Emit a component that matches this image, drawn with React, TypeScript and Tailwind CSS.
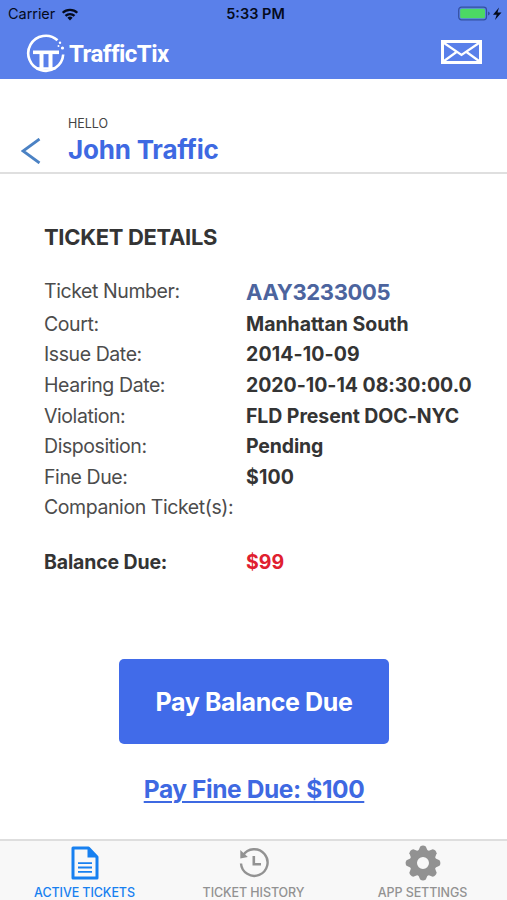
import type { ReactNode } from "react";

type Detail = { label: string; value: string; spacing: string };

const details: Detail[] = [
  { label: "Court:", value: "Manhattan South", spacing: "tracking-[-0.03px]" },
  { label: "Issue Date:", value: "2014-10-09", spacing: "tracking-[0.12px]" },
  { label: "Hearing Date:", value: "2020-10-14 08:30:00.0", spacing: "tracking-[-0.03px]" },
  { label: "Violation:", value: "FLD Present DOC-NYC", spacing: "tracking-[-0.08px]" },
  { label: "Disposition:", value: "Pending", spacing: "tracking-[-0.15px]" },
  { label: "Fine Due:", value: "$100", spacing: "tracking-[0.15px]" },
  { label: "Companion Ticket(s):", value: "", spacing: "tracking-[0px]" },
];

function StatusBar() {
  return (
    <div className="grid h-7 grid-cols-3 items-center pl-2 pr-1 text-[#050b1c]">
      <div className="flex items-center gap-[6px]">
        <span className="text-[14.5px] leading-none tracking-[-0.05px]">Carrier</span>
        <svg width="18" height="13" viewBox="0 0 17 13" fill="none" stroke="#050b1c" strokeWidth="2.3">
          <path d="M1.2 4.8a10.4 10.4 0 0 1 14.6 0M4 7.9a6.4 6.4 0 0 1 9 0" />
          <path d="M8.5 12.5 5.9 9.8a3.7 3.7 0 0 1 5.2 0z" fill="#050b1c" stroke="none" />
        </svg>
      </div>
      <span className="text-center text-[14.5px] font-semibold leading-none">5:33 PM</span>
      <div className="flex justify-end">
        <svg width="45" height="16" viewBox="0 0 45 16">
          <rect x=".7" y="1.2" width="27.8" height="12.6" rx="2.8" fill="none" stroke="#34509f" strokeWidth="1.2" />
          <rect x="2.2" y="2.7" width="24.8" height="9.6" rx="1.5" fill="#4cd964" />
          <path d="M30 5.500v4q1.800-.5 1.800-2T30 5.500" fill="#34509f" />
          <path d="M41 1.500 35 8.700h3.700l-1.700 5.300L43.500 6.500h-4z" fill="#050b1c" />
        </svg>
      </div>
    </div>
  );
}

function Logo() {
  return (
    <div className="flex items-center gap-[3px] text-white">
      <svg className="mb-[2px]" width="40" height="40" viewBox="0 0 40 40" fill="none" stroke="white">
        <path d="M31.500 7.300A17.500 17.500 0 1 0 37.200 21.500" strokeWidth="2.600" />
        <path d="M7 19.300h26" strokeWidth="3.600" />
        <path d="M15.500 20v16M24.500 20v16" strokeWidth="4" />
        <path d="M10.500 35.500h19" strokeWidth="2.500" />
        <circle cx="34" cy="9.800" r="1.200" fill="white" stroke="none" />
        <circle cx="36.500" cy="15" r="1.600" fill="white" stroke="none" />
        <circle cx="32.500" cy="13" r="1" fill="white" stroke="none" />
      </svg>
      <span className="mt-px font-['Roboto',sans-serif] text-[24px] font-bold leading-none tracking-[-0.5px]">TrafficTix</span>
    </div>
  );
}

function Tab({ label, color, children }: { label: string; color: string; children: ReactNode }) {
  return (
    <div className={`flex flex-1 flex-col items-center ${color}`}>
      <div className="flex h-[44px] items-center justify-center">{children}</div>
      <span className="mt-px whitespace-nowrap text-[12.5px] font-medium leading-[13px] tracking-[-0.08px]">{label}</span>
    </div>
  );
}

export default function App() {
  return (
    <div className="flex h-[900px] w-[507px] flex-col overflow-hidden bg-white font-['Inter',sans-serif] text-[#343434]">
      <header className="h-[79px] bg-[#5a80ea]">
        <StatusBar />
        <div className="flex h-[51px] items-center justify-between pl-[26px] pr-[25px]">
          <Logo />
          <svg className="mb-[3px]" width="41" height="24" viewBox="0 0 41 24" fill="none" stroke="white">
            <rect x="1.500" y="1.500" width="38" height="21" strokeWidth="3" />
            <path d="m3 3 17.500 12L38 3M3 21l12.500-9M38 21l-12.500-9" strokeWidth="2.200" />
          </svg>
        </div>
      </header>

      <section className="flex h-[95px] border-b-2 border-[#dfdfdf]">
        <div className="w-[68px] pl-[21px] pt-[59px]">
          <svg width="20" height="26" viewBox="0 0 20 26" fill="none" stroke="#4b82c4" strokeWidth="2.800">
            <path d="M18.500 1 2 13l16.500 12" />
          </svg>
        </div>
        <div className="pt-[37px]">
          <p className="text-[12.5px] leading-[15px] text-[#444]">HELLO</p>
          <h1 className="mt-[3px] text-[26px] font-[650] leading-[32px] tracking-[-0.2px] text-[#3e69e2]">John Traffic</h1>
        </div>
      </section>

      <main className="flex-1 pl-[44px]">
        <h2 className="mt-[49px] text-[22px] font-[650] leading-[28px] tracking-[-0.32px]">TICKET DETAILS</h2>
        <div className="mt-[25px] grid auto-rows-[30.6px] grid-cols-[202px_1fr] items-center whitespace-nowrap text-[19.5px] leading-[30px]">
          <span className="tracking-[-0.42px] text-[#4c4c4c]">Ticket Number:</span>
          <span className="pt-[2px] text-[22px] font-[650] tracking-[-0.35px] text-[#4c649e]">AAY3233005</span>
        </div>
        <dl className="mt-[2px] grid auto-rows-[30.6px] grid-cols-[202px_1fr] items-center whitespace-nowrap text-[19.5px] leading-[30px]">
          {details.map((d) => (
            <div key={d.label} className="contents">
              <dt className="tracking-[-0.42px] text-[#4c4c4c]">{d.label}</dt>
              <dd className={`font-[650] ${d.spacing}`}>{d.value}</dd>
            </div>
          ))}
        </dl>
        <div className="mt-[24px] grid grid-cols-[202px_1fr] text-[19.5px] font-[650] leading-[30px]">
          <span className="tracking-[-0.15px]">Balance Due:</span>
          <span className="text-[#e0202f]">$99</span>
        </div>
        <div className="mt-[82px] flex flex-col items-center pr-[43px]">
          <button className="h-[85px] w-[270px] rounded-[5px] bg-[#416be9] pt-[3px] text-[25px] font-[650] tracking-[-0.4px] text-white">
            Pay Balance Due
          </button>
          <a className="mt-[29px] text-[24.5px] font-[650] leading-[32px] tracking-[-0.4px] text-[#3e69e2] underline decoration-2 underline-offset-[3px]">
            Pay Fine Due: $100
          </a>
        </div>
      </main>

      <nav className="flex h-[61px] border-t-2 border-[#dedede] bg-[#f8f8f8]">
        <Tab label="ACTIVE TICKETS" color="text-[#1780f0]">
          <svg width="28" height="34" viewBox="0 0 28 34" fill="none" stroke="currentColor">
            <path d="M2 2h15.500L26 11v21H2z" strokeWidth="3" strokeLinejoin="round" />
            <path d="M16.500 1v10.500H27z" fill="currentColor" stroke="none" />
            <path d="M7 17.200h14M7 21.500h14M7 25.800h14" strokeWidth="1.800" />
          </svg>
        </Tab>
        <Tab label="TICKET HISTORY" color="text-[#929292]">
          <svg width="32" height="32" viewBox="0 0 32 32" fill="none" stroke="currentColor">
            <path d="M5 8.500A13.300 13.300 0 1 1 3 16.500" strokeWidth="2.400" />
            <path d="M2.300 3v8.500L9.800 10z" fill="currentColor" stroke="none" />
            <path d="M15.800 9v8.200h7.200" strokeWidth="2.600" />
          </svg>
        </Tab>
        <Tab label="APP SETTINGS" color="text-[#929292]">
          <svg width="36" height="36" viewBox="-18 -18 36 36">
            <circle r="9.700" fill="none" stroke="currentColor" strokeWidth="7.400" />
            {[0, 45, 90, 135, 180, 225, 270, 315].map((angle) => (
              <path key={angle} d="M-5-11.500-2.800-16.500Q0-18.300 2.800-16.500L5-11.500z" fill="currentColor" transform={`rotate(${angle})`} />
            ))}
          </svg>
        </Tab>
      </nav>
    </div>
  );
}
